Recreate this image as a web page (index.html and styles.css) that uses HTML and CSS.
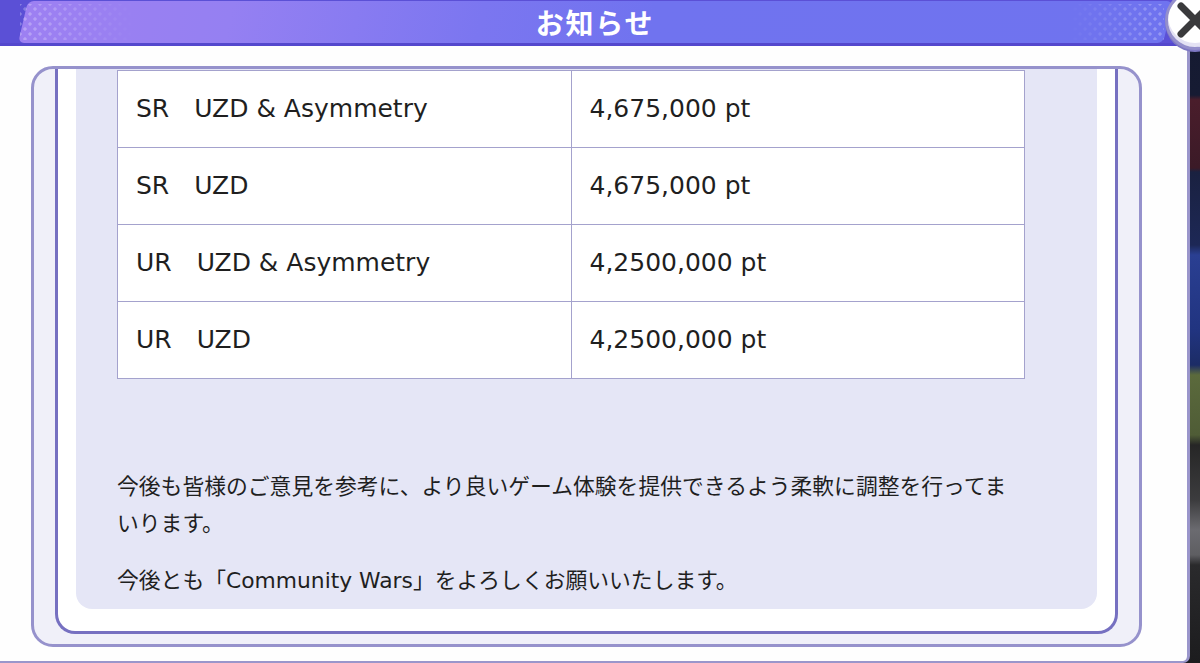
FILE: index.html
```html
<!DOCTYPE html>
<html lang="ja">
<head>
<meta charset="utf-8">
<title>お知らせ</title>
<link rel="stylesheet" href="styles.css">
</head>
<body>
<div class="modal">
  <header class="modal-header">
    <h1 class="modal-title">お知らせ</h1>
  </header>
  <div class="panel">
    <div class="frame-outer">
      <div class="frame-inner">
        <div class="card">
          <table class="reward-table">
            <tbody>
              <tr><td>SR　UZD &amp; Asymmetry</td><td>4,675,000 pt</td></tr>
              <tr><td>SR　UZD</td><td>4,675,000 pt</td></tr>
              <tr><td>UR　UZD &amp; Asymmetry</td><td>4,2500,000 pt</td></tr>
              <tr><td>UR　UZD</td><td>4,2500,000 pt</td></tr>
            </tbody>
          </table>
          <div class="notes">
            <p>今後も皆様のご意見を参考に、より良いゲーム体験を提供できるよう柔軟に調整を行ってまいります。</p>
            <p>今後とも「Community Wars」をよろしくお願いいたします。</p>
          </div>
        </div>
      </div>
    </div>
  </div>
</div>
<button class="close-btn" aria-label="閉じる">
  <svg width="54" height="54" viewBox="0 0 54 54">
    <path d="M13 13 L41 41 M41 13 L13 41" stroke="#3a3a3c" stroke-width="7" stroke-linecap="round" fill="none"/>
  </svg>
</button>
</body>
</html>
```
FILE: styles.css
```css
html, body {
  margin: 0;
  padding: 0;
}
body {
  width: 1200px;
  height: 663px;
  overflow: hidden;
  position: relative;
  font-family: "DejaVu Sans", "Noto Sans CJK JP", sans-serif;
  background: linear-gradient(180deg,
    #151a30 0px, #161b33 95px,
    #4a1d2b 100px, #3b1a27 168px,
    #1a2140 172px, #1d2856 245px,
    #2a3f92 255px, #213480 330px,
    #1c2c66 365px, #5b6a3c 375px,
    #4f5c36 435px, #262626 445px,
    #3c3c3e 500px, #6b6b70 530px,
    #5e5e62 555px, #2a2a2c 565px,
    #1c1c1e 663px);
}
.modal {
  width: 1190px;
  height: 663px;
  display: flex;
  flex-direction: column;
}
.modal-header {
  flex: none;
  height: 46px;
  box-sizing: border-box;
  background: #5b50d6;
  border-bottom: 3px solid #5448cd;
  position: relative;
  display: flex;
  align-items: center;
  justify-content: center;
  overflow: hidden;
}
.modal-header::before {
  content: "";
  position: absolute;
  left: 23px;
  right: 22px;
  top: 1px;
  bottom: 0;
  border-radius: 6px;
  transform: skewX(-13deg);
  background: linear-gradient(90deg, #9d80f2 0%, #9580f2 18%, #7b76f0 40%, #7073ef 55%, #6f73ef 100%);
}
.modal-header::after {
  content: "";
  position: absolute;
  left: 20px;
  right: 26px;
  top: 4px;
  bottom: 3px;
  background-image:
    radial-gradient(circle, rgba(255,255,255,0.28) 1.4px, transparent 1.9px),
    radial-gradient(circle, rgba(255,255,255,0.28) 1.4px, transparent 1.9px);
  background-size: 10px 10px, 10px 10px;
  background-position: 0 0, 5px 5px;
  -webkit-mask-image: linear-gradient(90deg, #000 0, rgba(0,0,0,0.6) 50px, transparent 115px, transparent calc(100% - 95px), rgba(0,0,0,0.6) calc(100% - 40px), #000 100%);
  mask-image: linear-gradient(90deg, #000 0, rgba(0,0,0,0.6) 50px, transparent 115px, transparent calc(100% - 95px), rgba(0,0,0,0.6) calc(100% - 40px), #000 100%);
}
.modal-title {
  position: relative;
  z-index: 1;
  margin: 0;
  padding-top: 1px;
  font-family: "Noto Sans CJK JP", sans-serif;
  font-weight: 700;
  font-size: 28px;
  line-height: 1;
  letter-spacing: 1.8px;
  color: #ffffff;
}
.panel {
  flex: 1;
  min-height: 0;
  background: #fefefe;
  border-right: 3px solid #9a96cb;
  border-bottom: 2px solid #9a96cb;
  border-bottom-right-radius: 7px;
  padding: 20px 45px 14px 31px;
  display: flex;
  flex-direction: column;
}
.frame-outer {
  flex: 1;
  min-height: 0;
  border: 3px solid #9692cc;
  border-radius: 22px;
  background: #f0f0f9;
  padding: 0 21px 10px;
  display: flex;
  flex-direction: column;
  overflow: hidden;
}
.frame-inner {
  flex: 1;
  min-height: 0;
  border: 3px solid #7670c1;
  border-top: none;
  border-radius: 0 0 20px 20px;
  background: #ffffff;
  padding: 0 18px 22px;
  display: flex;
  flex-direction: column;
}
.card {
  flex: 1;
  min-height: 0;
  background: #e5e6f6;
  border-radius: 0 0 16px 16px;
  padding: 0 72px 0 41px;
}
.reward-table {
  width: 908px;
  margin-top: 1px;
  border-collapse: collapse;
  table-layout: fixed;
  background: #ffffff;
}
.reward-table td {
  width: 50%;
  height: 77px;
  box-sizing: border-box;
  border: 1px solid #a4a2cd;
  padding: 0 0 0 18px;
  font-size: 25px;
  line-height: 30px;
  color: #1f1f1f;
  vertical-align: middle;
}
.notes {
  margin-top: 89px;
}
.notes p {
  margin: 0 0 20px;
  font-size: 21.8px;
  line-height: 37px;
  color: #1f1f1f;
}
.notes p:last-child {
  margin-bottom: 0;
}
.close-btn {
  position: absolute;
  left: 1165px;
  top: -10px;
  width: 60px;
  height: 60px;
  box-sizing: border-box;
  padding: 0;
  border: 3px solid #948fcc;
  border-radius: 50%;
  background: #ffffff;
  box-shadow: inset 0 -4px 0 #e4e2f4, 0 2px 0 #7e78c3;
  display: flex;
  align-items: center;
  justify-content: center;
}
.close-btn svg {
  display: block;
}
```
